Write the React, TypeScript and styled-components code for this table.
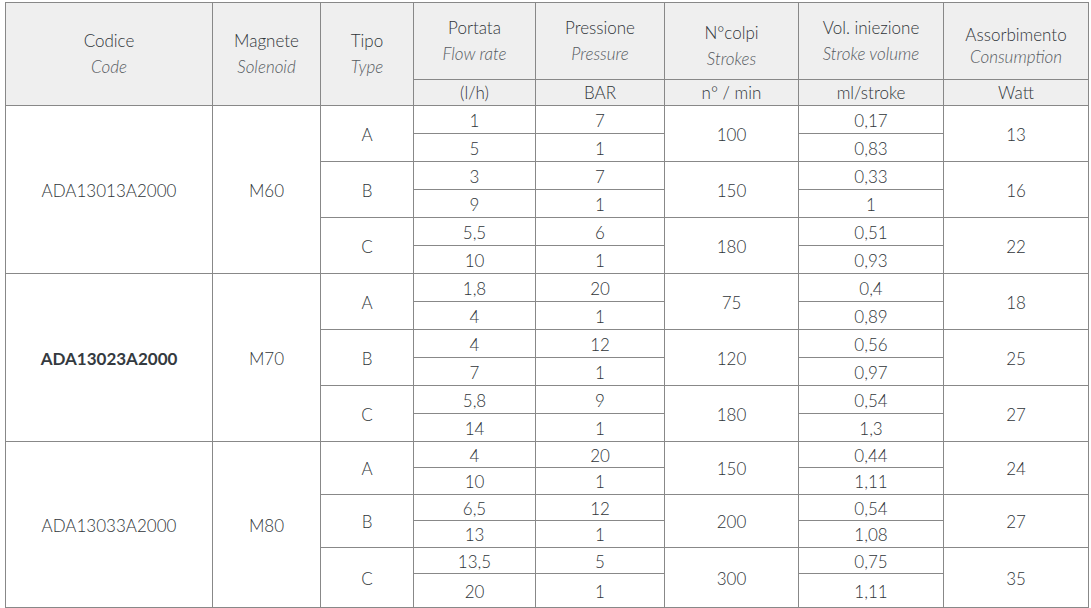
import styled, { createGlobalStyle } from "styled-components"

const GlobalStyle = createGlobalStyle`
  html, body {
    margin: 0;
    padding: 0;
    background: #ffffff;
  }
  body {
    font-family: Lato, "Open Sans", sans-serif;
    color: #2f3539;
  }
`

const Page = styled.div`
  padding: 2px 0 0 5px;
`

const Table = styled.table`
  width: 1083px;
  table-layout: fixed;
  border-collapse: collapse;
  border: 1px solid #888888;
  font-size: 17px;
  font-weight: 300;
`

const Head = styled.th<{ $drop?: number; $tight?: boolean }>`
  background: #efefef;
  border: 1px solid #888888;
  font-weight: 300;
  color: #2f3539;
  padding: ${(p) => p.$drop ?? 0}px 2px 0;
  line-height: ${(p) => (p.$tight ? 22 : 26)}px;
  vertical-align: middle;
`

const Sub = styled.span`
  display: block;
  font-style: italic;
  color: #565b5f;
`

const Unit = styled.th`
  background: #efefef;
  border: 1px solid #888888;
  font-weight: 300;
  color: #2f3539;
  height: 25px;
  padding: 0;
  line-height: 25px;
`

const Row = styled.tr<{ $h: number }>`
  height: ${(p) => p.$h}px;
`

const Cell = styled.td<{ $bold?: boolean }>`
  border: 1px solid #888888;
  text-align: center;
  vertical-align: middle;
  padding: 2px 0 0;
  line-height: 20px;
  font-weight: ${(p) => (p.$bold ? 700 : 300)};
  color: ${(p) => (p.$bold ? "#343a3f" : "#2f3539")};
`

type Sub = {
  tipo: string
  flow: [string, string]
  bar: [string, string]
  strokes: string
  vol: [string, string]
  watt: string
}

type Model = { code: string; magnet: string; bold?: boolean; subs: Sub[] }

const models: Model[] = [
  {
    code: "ADA13013A2000",
    magnet: "M60",
    subs: [
      { tipo: "A", flow: ["1", "5"], bar: ["7", "1"], strokes: "100", vol: ["0,17", "0,83"], watt: "13" },
      { tipo: "B", flow: ["3", "9"], bar: ["7", "1"], strokes: "150", vol: ["0,33", "1"], watt: "16" },
      { tipo: "C", flow: ["5,5", "10"], bar: ["6", "1"], strokes: "180", vol: ["0,51", "0,93"], watt: "22" }
    ]
  },
  {
    code: "ADA13023A2000",
    magnet: "M70",
    bold: true,
    subs: [
      { tipo: "A", flow: ["1,8", "4"], bar: ["20", "1"], strokes: "75", vol: ["0,4", "0,89"], watt: "18" },
      { tipo: "B", flow: ["4", "7"], bar: ["12", "1"], strokes: "120", vol: ["0,56", "0,97"], watt: "25" },
      { tipo: "C", flow: ["5,8", "14"], bar: ["9", "1"], strokes: "180", vol: ["0,54", "1,3"], watt: "27" }
    ]
  },
  {
    code: "ADA13033A2000",
    magnet: "M80",
    subs: [
      { tipo: "A", flow: ["4", "10"], bar: ["20", "1"], strokes: "150", vol: ["0,44", "1,11"], watt: "24" },
      { tipo: "B", flow: ["6,5", "13"], bar: ["12", "1"], strokes: "200", vol: ["0,54", "1,08"], watt: "27" },
      { tipo: "C", flow: ["13,5", "20"], bar: ["5", "1"], strokes: "300", vol: ["0,75", "1,11"], watt: "35" }
    ]
  }
]

// row heights measured from the sheet, the last group is a bit tighter
const heights = [
  [28, 28, 28, 28, 28, 28],
  [28, 28, 28, 28, 28, 28],
  [26, 27, 26, 27, 26, 34]
]

const widths = [207, 108, 93, 122, 129, 134, 145, 145]

const App = () => {
  return (
    <Page>
      <GlobalStyle />
      <Table>
        <colgroup>
          {widths.map((w, i) => (
            <col key={i} style={{ width: w }} />
          ))}
        </colgroup>
        <thead>
          <tr style={{ height: 77 }}>
            <Head rowSpan={2}>
              Codice<Sub>Code</Sub>
            </Head>
            <Head rowSpan={2}>
              Magnete<Sub>Solenoid</Sub>
            </Head>
            <Head rowSpan={2}>
              Tipo<Sub>Type</Sub>
            </Head>
            <Head>
              Portata<Sub>Flow rate</Sub>
            </Head>
            <Head>
              Pressione<Sub>Pressure</Sub>
            </Head>
            <Head $drop={10}>
              N°colpi<Sub>Strokes</Sub>
            </Head>
            <Head>
              Vol. iniezione<Sub>Stroke volume</Sub>
            </Head>
            <Head $drop={10} $tight>
              Assorbimento<Sub>Consumption</Sub>
            </Head>
          </tr>
          <tr>
            <Unit>(l/h)</Unit>
            <Unit>BAR</Unit>
            <Unit>n° / min</Unit>
            <Unit>ml/stroke</Unit>
            <Unit>Watt</Unit>
          </tr>
        </thead>
        <tbody>
          {models.map((m, mi) =>
            m.subs.map((s, si) => [0, 1].map((k) => {
              const first = si === 0 && k === 0
              return (
                <Row key={`${mi}-${si}-${k}`} $h={heights[mi][si * 2 + k]}>
                  {first && (
                    <Cell rowSpan={6} $bold={m.bold}>
                      {m.code}
                    </Cell>
                  )}
                  {first && <Cell rowSpan={6}>{m.magnet}</Cell>}
                  {k === 0 && <Cell rowSpan={2}>{s.tipo}</Cell>}
                  <Cell>{s.flow[k]}</Cell>
                  <Cell>{s.bar[k]}</Cell>
                  {k === 0 && <Cell rowSpan={2}>{s.strokes}</Cell>}
                  <Cell>{s.vol[k]}</Cell>
                  {k === 0 && <Cell rowSpan={2}>{s.watt}</Cell>}
                </Row>
              )
            }))
          )}
        </tbody>
      </Table>
    </Page>
  )
}

export default App
